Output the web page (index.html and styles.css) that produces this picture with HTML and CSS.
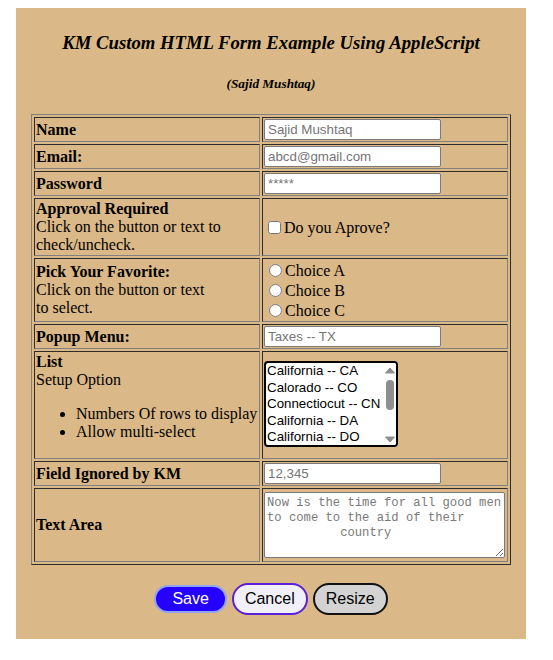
FILE: index.html
```html
<!DOCTYPE html>
<html>
<head>
<meta charset="utf-8">
<title>KM Custom HTML Form Example Using AppleScript</title>
<link rel="stylesheet" href="styles.css">
</head>
<body>
<div class="panel">
  <h3 class="title">KM Custom HTML Form Example Using AppleScript</h3>
  <h5 class="subtitle">(Sajid Mushtaq)</h5>
  <form>
    <table class="form-table">
      <tr>
        <td class="label"><b>Name</b></td>
        <td class="field"><input class="text-input" type="text" placeholder="Sajid Mushtaq"></td>
      </tr>
      <tr>
        <td class="label"><b>Email:</b></td>
        <td class="field"><input class="text-input" type="text" placeholder="abcd@gmail.com"></td>
      </tr>
      <tr>
        <td class="label"><b>Password</b></td>
        <td class="field"><input class="text-input" type="password" placeholder="*****"></td>
      </tr>
      <tr>
        <td class="label"><b>Approval Required</b><br>Click on the button or text to check/uncheck.</td>
        <td class="field"><label class="check"><input type="checkbox">Do you Aprove?</label></td>
      </tr>
      <tr>
        <td class="label"><b>Pick Your Favorite:</b><br>Click on the button or text<br>to select.</td>
        <td class="field">
          <label class="radio"><input type="radio" name="fav">Choice A</label>
          <label class="radio"><input type="radio" name="fav">Choice B</label>
          <label class="radio"><input type="radio" name="fav">Choice C</label>
        </td>
      </tr>
      <tr>
        <td class="label"><b>Popup Menu:</b></td>
        <td class="field"><input class="text-input" type="text" placeholder="Taxes -- TX"></td>
      </tr>
      <tr>
        <td class="label"><b>List</b><br>Setup Option
          <ul class="bullets">
            <li>Numbers Of rows to display</li>
            <li>Allow multi-select</li>
          </ul>
        </td>
        <td class="field">
          <div class="listbox">
            <div class="opt">California -- CA</div>
            <div class="opt">Calorado -- CO</div>
            <div class="opt">Connectiocut -- CN</div>
            <div class="opt">California -- DA</div>
            <div class="opt">California -- DO</div>
            <svg class="scrollbar" width="12" height="82" viewBox="0 0 12 82">
              <polygon points="1.5,10 6,5 10.5,10" fill="#8f8f8f" stroke="#8f8f8f" stroke-width="1" stroke-linejoin="round"/>
              <rect x="2" y="17" width="8" height="30" rx="4" fill="#8f8f8f"/>
              <polygon points="1.5,74 6,79 10.5,74" fill="#8f8f8f" stroke="#8f8f8f" stroke-width="1" stroke-linejoin="round"/>
            </svg>
          </div>
        </td>
      </tr>
      <tr>
        <td class="label"><b>Field Ignored by KM</b></td>
        <td class="field"><input class="text-input" type="text" placeholder="12,345"></td>
      </tr>
      <tr>
        <td class="label"><b>Text Area</b></td>
        <td class="field"><textarea class="area">Now is the time for all good men
to come to the aid of their
          country</textarea></td>
      </tr>
    </table>
    <div class="buttons">
      <button type="button" class="btn btn-save">Save</button>
      <button type="button" class="btn btn-cancel">Cancel</button>
      <button type="button" class="btn btn-resize">Resize</button>
    </div>
  </form>
</div>
</body>
</html>
```

FILE: styles.css
```css
html, body {
  background: #ffffff;
}
body {
  margin: 8px;
  font-family: "Liberation Serif", "Times New Roman", serif;
  font-size: 16px;
  color: #000;
}
.panel {
  box-sizing: border-box;
  width: 510px;
  margin-left: 8px;
  padding: 9px 15px 24px;
  background: #dbb887;
}
.title {
  margin: 15px 0 0;
  font-size: 18.72px;
  line-height: 21px;
  font-style: italic;
  font-weight: bold;
  text-align: center;
}
.subtitle {
  margin: 23px 0 0;
  font-size: 13.28px;
  line-height: 15px;
  font-style: italic;
  font-weight: bold;
  text-align: center;
}
form {
  margin: 23px 0 0;
}
.form-table {
  width: 100%;
  border-collapse: separate;
  border-spacing: 2px;
  border: 1px outset grey;
}
.form-table td {
  border: 1px inset grey;
  padding: 1px;
  line-height: 18px;
  vertical-align: middle;
}
.label {
  width: 222px;
}
.text-input {
  box-sizing: border-box;
  width: 177px;
  height: 21px;
  margin: 0;
  padding: 1px 3px;
  border: 1px solid #7a7a7a;
  border-radius: 2px;
  background: #fff;
  font-family: "Liberation Sans", Arial, sans-serif;
  font-size: 13.33px;
  vertical-align: middle;
}
.text-input::placeholder {
  color: #757575;
}
.check input {
  margin: 3px 3px 3px 4px;
  vertical-align: -1px;
}
.radio {
  display: block;
  height: 20px;
  line-height: 22px;
}
.radio input {
  margin: 0 3px 0 5px;
  vertical-align: -1px;
}
.bullets {
  margin: 16px 0;
  padding-left: 40px;
}
.listbox {
  position: relative;
  box-sizing: border-box;
  width: 134px;
  height: 86px;
  margin-top: -2px;
  border: 2px solid #000;
  border-radius: 4px;
  background: #fff;
  overflow: hidden;
  font-family: "Liberation Sans", Arial, sans-serif;
  font-size: 13.33px;
}
.opt {
  line-height: 16.5px;
  padding: 0 0 0 1px;
  white-space: nowrap;
}
.scrollbar {
  position: absolute;
  top: 0;
  right: 0;
  background: #fff;
}
.area {
  display: block;
  box-sizing: border-box;
  width: 241px;
  height: 66px;
  margin: 2px 0;
  padding: 3px 1px 2px 2px;
  border: 1px solid #7a7a7a;
  border-radius: 2px;
  font-family: "Liberation Mono", "Courier New", monospace;
  font-size: 12.2px;
  line-height: 15px;
  color: #7a7a7a;
  white-space: pre;
  overflow: hidden;
}
.buttons {
  display: flex;
  justify-content: center;
  align-items: center;
  gap: 5px;
  margin-top: 18px;
}
.btn {
  font-family: "Liberation Sans", Arial, sans-serif;
  font-size: 16px;
  line-height: 18px;
  border-radius: 999px;
  border: 2px solid #000;
  margin: 0;
  color: #000;
}
.btn-save {
  padding: 3px 16px;
  background: #2600ff;
  border-color: #8fa5f2;
  color: #fff;
}
.btn-cancel {
  padding: 5px 11px;
  background: #f1eff8;
  border-color: #5a20d8;
}
.btn-resize {
  padding: 5px 11px;
  background: #d3d3d3;
  border-color: #111;
}
```
